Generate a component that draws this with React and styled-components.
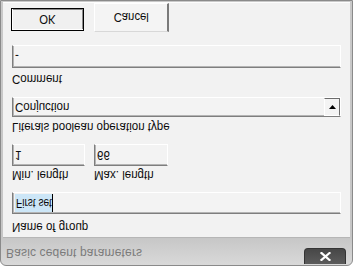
import React from "react";
import styled, { createGlobalStyle } from "styled-components";

const GlobalStyle = createGlobalStyle`
  html, body { margin: 0; padding: 0; background: #ffffff; }
  body { font-family: "Liberation Sans", Arial, sans-serif; color: #0c0c0c; }
  * { box-sizing: border-box; }
`;

/* The whole dialog is shown mirrored top-to-bottom, as in the reference. */
const Window = styled.div`
  width: 353px;
  height: 266px;
  display: flex;
  flex-direction: column;
  border: 1px solid #8a8a8a;
  border-radius: 6px 6px 0 0;
  background: linear-gradient(#d9d9d9, #c6c6c6 28px, #c9c9c9);
  padding: 0 2px 1px 2px;
  transform: scaleY(-1);
  overflow: hidden;
`;

const TitleBar = styled.div`
  height: 27px;
  flex: none;
  display: flex;
  align-items: flex-start;
`;

const Title = styled.div`
  font-size: 12px;
  line-height: 14px;
  color: #7b7b7b;
  padding: 5px 0 0 3px;
  white-space: nowrap;
  letter-spacing: 0.15px;
`;

const CloseButton = styled.div`
  margin: 1px 4px 0 auto;
  width: 42px;
  height: 16px;
  border: 1px solid #343434;
  border-top: none;
  border-radius: 0 0 4px 4px;
  background: linear-gradient(#5c5c5c, #474747);
  display: flex;
  align-items: center;
  justify-content: center;
`;

const Client = styled.div`
  flex: 1;
  background: #f2f2f2;
  border-top: 1px solid #b6b6b6;
  border-bottom: 1px solid #fdfdfd;
  padding-left: 9px;
  display: flex;
  flex-direction: column;
`;

const Label = styled.div`
  height: 13px;
  font-size: 12px;
  line-height: 13px;
  margin-top: ${(p) => p.$mt || 0}px;
  transform: scaleX(0.96);
  transform-origin: 0 0;
  white-space: nowrap;
`;

const Sunken = styled.div`
  width: ${(p) => p.$w}px;
  height: ${(p) => p.$h || 22}px;
  margin-top: ${(p) => p.$mt || 0}px;
  border-top: 1px solid #7e7e7e;
  border-left: 1px solid #7e7e7e;
  border-bottom: 1px solid #ffffff;
  border-right: 1px solid #ffffff;
  box-shadow: inset 1px 1px 0 #b4b4b4;
  background: #f3f3f3;
  display: flex;
  align-items: center;
  padding-left: 2px;
  font-size: 12px;
`;

const FieldText = styled.span`
  display: inline-block;
  white-space: nowrap;
  width: ${(p) => (p.$fit ? `${p.$fit}px` : "auto")};
  transform: scaleX(${(p) => p.$sx || 0.96});
  transform-origin: 0 50%;
`;

const Selected = styled.span`
  display: inline-flex;
  align-items: center;
  height: 18px;
  padding: 0 1px 0 1px;
  background: #cce6f7;
  border-right: 1px solid #000;
`;

const Pair = styled.div`
  display: flex;
  gap: 9px;
`;

const Column = styled.div`
  display: flex;
  flex-direction: column;
`;

const Combo = styled(Sunken)`
  justify-content: space-between;
`;

const DropButton = styled.div`
  width: 16px;
  height: 18px;
  border-top: 1px solid #ffffff;
  border-left: 1px solid #ffffff;
  border-right: 1px solid #6c6c6c;
  border-bottom: 1px solid #6c6c6c;
  background: #f4f4f4;
  display: flex;
  align-items: center;
  justify-content: center;
`;

const ButtonRow = styled.div`
  display: flex;
  align-items: flex-start;
  gap: 9px;
  margin-top: 13px;
  margin-left: -1px;
`;

const DefaultButton = styled.div`
  width: 73px;
  height: 23px;
  margin-top: 1px;
  border: 1px solid #000;
  box-shadow: inset 1px 1px 0 #ffffff, inset -1px -1px 0 #8a8a8a;
  background: #f0f0f0;
  display: flex;
  align-items: center;
  justify-content: center;
  font-size: 13px;
`;

const PlainButton = styled.div`
  width: 75px;
  height: 29px;
  margin-left: 1px;
  border-left: 1px solid #ffffff;
  border-bottom: 1px solid #ffffff;
  border-right: 2px solid #7a7a7a;
  border-top: 1px solid #d8d8d8;
  background: #f4f4f4;
  display: flex;
  align-items: center;
  justify-content: center;
  font-size: 13px;
`;

const ButtonText = styled.span`
  display: inline-block;
  transform: scaleX(0.87);
`;

export default function App() {
  return (
    <>
      <GlobalStyle />
      <Window>
        <TitleBar>
          <Title>Basic cedent parameters</Title>
          <CloseButton>
            <svg width="11" height="9" viewBox="0 0 11 9">
              <path d="M1.5 1 L9.5 8 M9.5 1 L1.5 8" stroke="#ffffff" strokeWidth="2.2" strokeLinecap="square" />
            </svg>
          </CloseButton>
        </TitleBar>
        <Client>
          <Label $mt={4}>Name of group</Label>
          <Sunken $w={329} $mt={6}>
            <Selected>
              <FieldText $sx={0.84} $fit={35}>First set</FieldText>
            </Selected>
          </Sunken>

          <Pair>
            <Column>
              <Label $mt={11}>Min. length</Label>
              <Sunken $w={73} $mt={2}>
                <FieldText>1</FieldText>
              </Sunken>
            </Column>
            <Column>
              <Label $mt={11}>Max. length</Label>
              <Sunken $w={74} $mt={2}>
                <FieldText>66</FieldText>
              </Sunken>
            </Column>
          </Pair>

          <Label $mt={11}>Literals boolean operation type</Label>
          <Combo $w={329} $h={20} $mt={3}>
            <FieldText>Conjuction</FieldText>
            <DropButton>
              <svg width="7" height="4" viewBox="0 0 7 4">
                <path d="M0 0 H7 L3.5 4 Z" fill="#000" />
              </svg>
            </DropButton>
          </Combo>

          <Label $mt={12}>Comment</Label>
          <Sunken $w={329} $h={23} $mt={4}>
            <FieldText>-</FieldText>
          </Sunken>

          <ButtonRow>
            <DefaultButton>
              <ButtonText>OK</ButtonText>
            </DefaultButton>
            <PlainButton>
              <ButtonText>Cancel</ButtonText>
            </PlainButton>
          </ButtonRow>
        </Client>
      </Window>
    </>
  );
}
